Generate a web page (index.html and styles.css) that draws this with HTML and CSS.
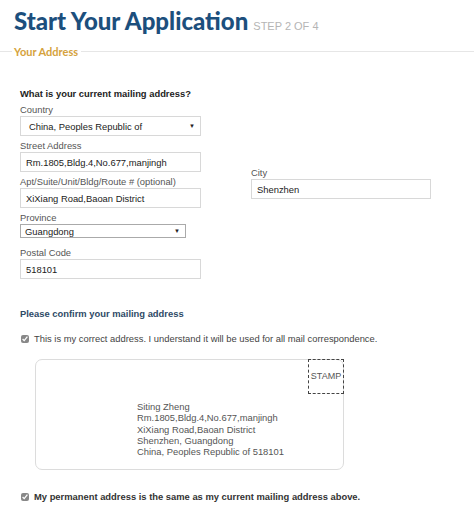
FILE: index.html
```html
<!DOCTYPE html>
<html lang="en">
<head>
    <meta charset="UTF-8">
    <meta name="viewport" content="width=device-width, initial-scale=1.0">
    <title>Start Your Application</title>
    <link rel="stylesheet" href="styles.css">
</head>
<body>
    <div class="page-head">
        <h1>Start Your Application</h1>
        <span class="step">STEP 2 OF 4</span>
    </div>

    <div class="section-title"><span>Your Address</span></div>

    <form class="address-form">
        <h3>What is your current mailing address?</h3>
        <div class="columns">
            <div class="col-left">
                <label for="country">Country</label>
                <div class="select-box wide">
                    <span>China, Peoples Republic of</span>
                    <span class="arrow">&#9660;</span>
                </div>

                <label for="street">Street Address</label>
                <input type="text" id="street" value="Rm.1805,Bldg.4,No.677,manjingh">

                <label for="apt">Apt/Suite/Unit/Bldg/Route # (optional)</label>
                <input type="text" id="apt" value="XiXiang Road,Baoan District">

                <label for="province">Province</label>
                <div class="select-box small">
                    <span>Guangdong</span>
                    <span class="arrow">&#9660;</span>
                </div>

                <label for="postal" class="postal-label">Postal Code</label>
                <input type="text" id="postal" value="518101">
            </div>
            <div class="col-right">
                <label for="city">City</label>
                <input type="text" id="city" value="Shenzhen">
            </div>
        </div>

        <h3 class="confirm-title">Please confirm your mailing address</h3>
        <label class="check-row">
            <input type="checkbox" checked>
            <span>This is my correct address. I understand it will be used for all mail correspondence.</span>
        </label>

        <div class="envelope">
            <div class="stamp">STAMP</div>
            <div class="envelope-address">
                Siting Zheng<br>
                Rm.1805,Bldg.4,No.677,manjingh<br>
                XiXiang Road,Baoan District<br>
                Shenzhen, Guangdong<br>
                China, Peoples Republic of 518101
            </div>
        </div>

        <label class="check-row bold">
            <input type="checkbox" checked>
            <span>My permanent address is the same as my current mailing address above.</span>
        </label>
    </form>
</body>
</html>
```

FILE: styles.css
```css
body {
    margin: 0;
    background: #fff;
    font-family: "Liberation Sans", Arial, sans-serif;
    font-size: 9.4px;
    color: #444;
}
.page-head {
    display: flex;
    align-items: baseline;
    padding: 4px 0 0 14px;
    height: 38px;
}
h1 {
    margin: 0;
    font-family: Lato, sans-serif;
    font-weight: 900;
    font-size: 24px;
    line-height: 34px;
    color: #1c4f7d;
}
.step {
    margin-left: 5px;
    font-size: 11px;
    color: #b5b5b5;
}
.section-title {
    display: flex;
    align-items: center;
    height: 18px;
}
.section-title::before,
.section-title::after {
    content: "";
    height: 1px;
    background: #e6e6e6;
}
.section-title::before {
    width: 12px;
}
.section-title::after {
    flex: 1;
}
.section-title span {
    padding: 0 3px 0 2px;
    font-family: Lato, sans-serif;
    font-weight: 700;
    font-size: 11px;
    color: #d5a23c;
}
.address-form {
    padding: 0 20px;
}
h3 {
    margin: 28px 0 0;
    font-size: 9.4px;
    line-height: 12px;
    font-weight: bold;
    color: #222;
}
.columns {
    display: grid;
    grid-template-columns: 181px 180px;
    column-gap: 50px;
    align-items: start;
}
.col-left,
.col-right {
    display: flex;
    flex-direction: column;
}
.col-right {
    margin-top: 63px;
}
label {
    display: block;
    font-size: 9.4px;
    line-height: 12px;
    color: #555;
    padding-top: 4px;
    margin-bottom: 0;
}
input[type="text"] {
    box-sizing: border-box;
    width: 181px;
    height: 20px;
    margin: 0;
    padding: 0 5px;
    border: 1px solid #d8d8d8;
    font-family: "Liberation Sans", Arial, sans-serif;
    font-size: 9.4px;
    color: #222;
}
.col-right input[type="text"] {
    width: 180px;
}
.select-box {
    box-sizing: border-box;
    display: flex;
    justify-content: space-between;
    align-items: center;
    border: 1px solid #d8d8d8;
    font-size: 9.4px;
    color: #222;
}
.select-box.wide {
    width: 181px;
    height: 20px;
    padding: 0 5px 0 8px;
}
.select-box.small {
    width: 166px;
    height: 14px;
    padding: 0 5px 0 4px;
    border-color: #aaa;
}
.arrow {
    font-size: 6px;
    color: #222;
}
.postal-label {
    padding-top: 9px;
}
h3.confirm-title {
    margin: 29px 0 13px;
    color: #2e4a66;
}
.check-row {
    display: flex;
    align-items: center;
    gap: 5px;
    height: 12px;
    padding: 0;
    margin: 0;
    font-size: 9.4px;
    color: #444;
}
.check-row.bold {
    font-weight: bold;
    color: #333;
    margin-top: 21px;
}
.check-row input {
    width: 8px;
    height: 8px;
    margin: 0 0 0 1px;
    accent-color: #888;
}
.envelope {
    box-sizing: border-box;
    position: relative;
    width: 309px;
    height: 111px;
    margin: 14px 0 0 15px;
    border: 1px solid #dcdcdc;
    border-radius: 7px;
    padding: 41px 0 0 101px;
}
.stamp {
    position: absolute;
    top: -1px;
    right: -1px;
    box-sizing: border-box;
    width: 36px;
    height: 35px;
    border: 1px dashed #444;
    font-size: 9px;
    line-height: 33px;
    text-align: center;
    color: #555;
}
.envelope-address {
    font-size: 9.4px;
    line-height: 11.25px;
    color: #555;
}
```
